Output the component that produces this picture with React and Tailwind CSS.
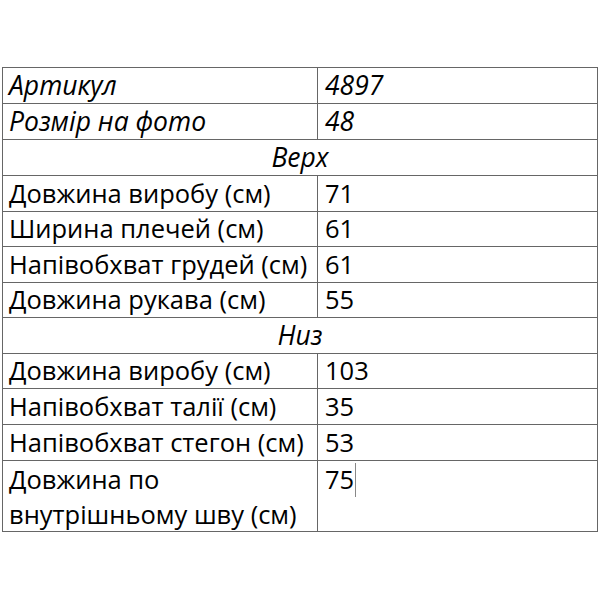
const rows = [
  { label: 'Артикул', value: '4897', italic: true, h: 'h-[36px]' },
  { label: 'Розмір на фото', value: '48', italic: true, h: 'h-[36px]' },
  { section: 'Верх', h: 'h-[36px]' },
  { label: 'Довжина виробу (см)', value: '71', h: 'h-[36px]' },
  { label: 'Ширина плечей (см)', value: '61', h: 'h-[35px]' },
  { label: 'Напівобхват грудей (см)', value: '61', h: 'h-[36px]' },
  { label: 'Довжина рукава (см)', value: '55', h: 'h-[35px]' },
  { section: 'Низ', h: 'h-[36px]' },
  { label: 'Довжина виробу (см)', value: '103', h: 'h-[35px]' },
  { label: 'Напівобхват талії (см)', value: '35', h: 'h-[36px]' },
  { label: 'Напівобхват стегон (см)', value: '53', h: 'h-[36px]' },
];

export default function App() {
  return (
    <div className="w-[600px] h-[600px] bg-white pt-[67px] pl-[2px] text-black" style={{ fontFamily: '"Open Sans", sans-serif' }}>
      <div className="w-[596px] border-t border-l border-r border-[#666]">
        {rows.map((r, i) =>
          r.section ? (
            <div key={i} className={`${r.h} border-b border-[#666] flex items-center justify-center`}>
              <span className="italic text-[26.5px] leading-none">{r.section}</span>
            </div>
          ) : (
            <div key={i} className={`${r.h} border-b border-[#666] flex`}>
              <div className={`w-[315px] border-r border-[#666] pl-[6px] flex items-center leading-none whitespace-nowrap ${r.italic ? 'italic text-[26.5px]' : 'text-[25.5px]'}`}>
                {r.label}
              </div>
              <div className={`flex-1 pl-[7px] flex items-center leading-none ${r.italic ? 'italic text-[26.5px]' : 'text-[25.5px]'}`}>
                {r.value}
              </div>
            </div>
          )
        )}
        <div className="h-[71px] border-b border-[#666] flex">
          <div className="w-[315px] border-r border-[#666] pl-[6px] pt-[1px] text-[25.5px] leading-[35px] whitespace-nowrap">
            Довжина по<br />внутрішньому шву (см)
          </div>
          <div className="flex-1 pl-[7px] pt-[1px] text-[25.5px] leading-[35px] flex items-start">
            <span>75</span>
            <span className="ml-[1px] mt-[1px] w-px h-[34px] bg-[#888]" />
          </div>
        </div>
      </div>
    </div>
  );
}
